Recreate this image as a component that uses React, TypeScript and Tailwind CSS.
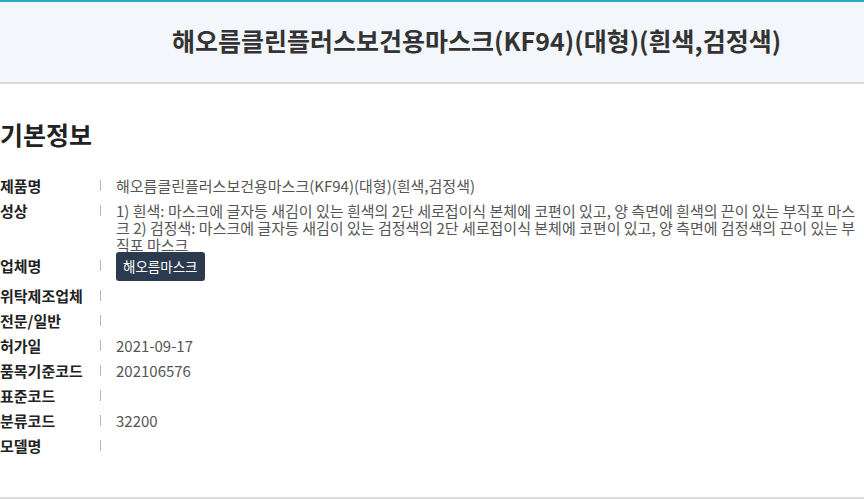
import React from 'react';

interface InfoRow {
  label: string;
  value?: string;
  company?: string;
}

const rows: InfoRow[] = [
  { label: '제품명', value: '해오름클린플러스보건용마스크(KF94)(대형)(흰색,검정색)' },
  {
    label: '성상',
    value:
      '1) 흰색: 마스크에 글자등 새김이 있는 흰색의 2단 세로접이식 본체에 코편이 있고, 양 측면에 흰색의 끈이 있는 부직포 마스크 2) 검정색: 마스크에 글자등 새김이 있는 검정색의 2단 세로접이식 본체에 코편이 있고, 양 측면에 검정색의 끈이 있는 부직포 마스크',
  },
  { label: '업체명', company: '해오름마스크' },
  { label: '위탁제조업체' },
  { label: '전문/일반' },
  { label: '허가일', value: '2021-09-17' },
  { label: '품목기준코드', value: '202106576' },
  { label: '표준코드' },
  { label: '분류코드', value: '32200' },
  { label: '모델명' },
];

const App: React.FC = () => {
  return (
    <div
      className="w-[864px] h-[499px] bg-white flex flex-col overflow-hidden"
      style={{ fontFamily: '"Noto Sans CJK KR", "Noto Sans", sans-serif' }}
    >
      <header className="h-[84px] shrink-0 border-t-[2px] border-[#2aa9c4] border-b-[2px] border-b-[#d9dadd] bg-[#f3f6fa] flex items-center pl-[172px]">
        <h1 className="-mt-[3px] text-[25px] font-bold text-[#333] leading-none">
          해오름클린플러스보건용마스크(KF94)(대형)(흰색,검정색)
        </h1>
      </header>

      <section className="flex-1 pr-[6px]">
        <h2 className="mt-[32px] text-[25px] font-bold text-[#222] leading-[36px]">기본정보</h2>

        <dl className="mt-[21px] flex flex-col">
          {rows.map((row) => (
            <div key={row.label} className="flex items-start">
              <dt className="w-[100px] shrink-0 text-[15px] font-bold text-[#222] leading-[25px]">{row.label}</dt>
              <span className="w-px h-[11px] mt-[7px] bg-[#b8b8b8] shrink-0" />
              <dd className="flex-1 pl-[15px] text-[15px] text-[#555] leading-[17px] pt-[4px]">
                {row.company ? (
                  <span className="-mt-[6px] mb-[2px] inline-block rounded-[3px] bg-[#2c3a50] px-[7px] py-[6px] text-[13.5px] leading-[17px] text-white">
                    {row.company}
                  </span>
                ) : (
                  row.value
                )}
              </dd>
            </div>
          ))}
        </dl>
      </section>

      <div className="h-[2px] shrink-0 bg-[#dcdcdc]" />
    </div>
  );
};

export default App;
